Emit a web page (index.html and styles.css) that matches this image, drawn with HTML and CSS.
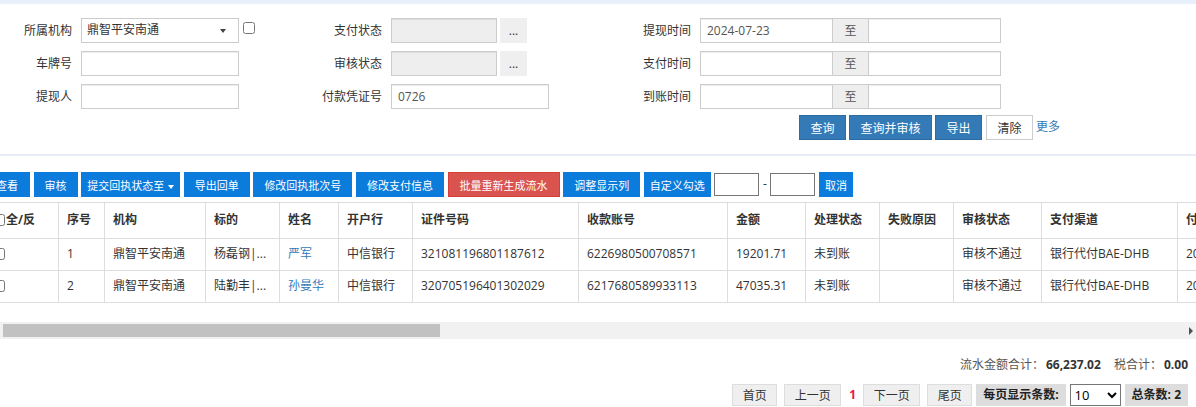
FILE: index.html
```html
<!DOCTYPE html>
<html lang="zh-CN">
<head>
    <meta charset="UTF-8">
    <title>提现流水</title>
    <link rel="stylesheet" href="styles.css">
</head>
<body>
    <div class="topbar"></div>

    <form class="search">
        <div class="search-grid">
            <label>所属机构</label>
            <div class="ctrl">
                <div class="input select w158">鼎智平安南通<span class="caret"></span></div>
                <input type="checkbox" class="org-check">
            </div>
            <label>支付状态</label>
            <div class="ctrl">
                <input type="text" class="input readonly w106" readonly>
                <button type="button" class="dots">...</button>
            </div>
            <label>提现时间</label>
            <div class="ctrl">
                <input type="text" class="input w133" value="2024-07-23">
                <span class="addon">至</span>
                <input type="text" class="input w133">
            </div>

            <label>车牌号</label>
            <div class="ctrl"><input type="text" class="input w158"></div>
            <label>审核状态</label>
            <div class="ctrl">
                <input type="text" class="input readonly w106" readonly>
                <button type="button" class="dots">...</button>
            </div>
            <label>支付时间</label>
            <div class="ctrl">
                <input type="text" class="input w133">
                <span class="addon">至</span>
                <input type="text" class="input w133">
            </div>

            <label>提现人</label>
            <div class="ctrl"><input type="text" class="input w158"></div>
            <label>付款凭证号</label>
            <div class="ctrl"><input type="text" class="input w158" value="0726"></div>
            <label>到账时间</label>
            <div class="ctrl">
                <input type="text" class="input w133">
                <span class="addon">至</span>
                <input type="text" class="input w133">
            </div>
        </div>

        <div class="actions">
            <button type="button" class="btn btn-primary">查询</button>
            <button type="button" class="btn btn-primary">查询并审核</button>
            <button type="button" class="btn btn-primary">导出</button>
            <button type="button" class="btn btn-default">清除</button>
            <a href="#" class="more">更多</a>
        </div>
    </form>

    <div class="divider"></div>

    <div class="list">
        <div class="toolbar">
            <button class="tbtn first">查看</button>
            <button class="tbtn">审核</button>
            <button class="tbtn drop">提交回执状态至<span class="caret white"></span></button>
            <button class="tbtn">导出回单</button>
            <button class="tbtn">修改回执批次号</button>
            <button class="tbtn">修改支付信息</button>
            <button class="tbtn danger">批量重新生成流水</button>
            <button class="tbtn">调整显示列</button>
            <button class="tbtn tight">自定义勾选</button>
            <input type="text" class="pick">
            <span class="dash">-</span>
            <input type="text" class="pick">
            <button class="tbtn tight">取消</button>
        </div>

        <div class="table-wrap">
            <table class="grid">
                <colgroup>
                    <col style="width:74px">
                    <col style="width:46px">
                    <col style="width:101px">
                    <col style="width:74px">
                    <col style="width:59px">
                    <col style="width:74px">
                    <col style="width:166px">
                    <col style="width:149px">
                    <col style="width:78px">
                    <col style="width:74px">
                    <col style="width:74px">
                    <col style="width:88px">
                    <col style="width:136px">
                    <col style="width:140px">
                </colgroup>
                <thead>
                    <tr>
                        <th><input type="checkbox" class="row-check">全/反</th>
                        <th>序号</th>
                        <th>机构</th>
                        <th>标的</th>
                        <th>姓名</th>
                        <th>开户行</th>
                        <th>证件号码</th>
                        <th>收款账号</th>
                        <th>金额</th>
                        <th>处理状态</th>
                        <th>失败原因</th>
                        <th>审核状态</th>
                        <th>支付渠道</th>
                        <th>付款时间</th>
                    </tr>
                </thead>
                <tbody>
                    <tr>
                        <td><input type="checkbox" class="row-check"></td>
                        <td>1</td>
                        <td>鼎智平安南通</td>
                        <td>杨磊钢|...</td>
                        <td><a href="#" class="name">严军</a></td>
                        <td>中信银行</td>
                        <td>321081196801187612</td>
                        <td>6226980500708571</td>
                        <td>19201.71</td>
                        <td>未到账</td>
                        <td></td>
                        <td>审核不通过</td>
                        <td>银行代付BAE-DHB</td>
                        <td>2024-07-23 10:21</td>
                    </tr>
                    <tr>
                        <td><input type="checkbox" class="row-check"></td>
                        <td>2</td>
                        <td>鼎智平安南通</td>
                        <td>陆勤丰|...</td>
                        <td><a href="#" class="name">孙曼华</a></td>
                        <td>中信银行</td>
                        <td>320705196401302029</td>
                        <td>6217680589933113</td>
                        <td>47035.31</td>
                        <td>未到账</td>
                        <td></td>
                        <td>审核不通过</td>
                        <td>银行代付BAE-DHB</td>
                        <td>2024-07-23 10:21</td>
                    </tr>
                </tbody>
            </table>
        </div>

        <div class="hscroll">
            <div class="thumb"></div>
            <span class="arrow"></span>
        </div>
    </div>

    <div class="totals">
        <span class="sum-label">流水金额合计：</span><b class="sum-value">66,237.02</b>
        <span class="sum-label">税合计：</span><b class="sum-value last">0.00</b>
    </div>

    <div class="pager">
        <button class="pbtn">首页</button>
        <button class="pbtn">上一页</button>
        <span class="current">1</span>
        <button class="pbtn">下一页</button>
        <button class="pbtn">尾页</button>
        <span class="pinfo">每页显示条数:</span>
        <select class="psize">
            <option>10</option>
            <option>20</option>
            <option>50</option>
        </select>
        <span class="pinfo">总条数: 2</span>
    </div>
</body>
</html>
```

FILE: styles.css
```css
body {
    margin: 0;
    width: 1196px;
    overflow: hidden;
    background: #fff;
    color: #333;
    font-family: "Open Sans", "Noto Sans CJK SC", sans-serif;
    font-size: 12px;
    line-height: 1.4;
}

button,
input,
select {
    font-family: inherit;
}

.topbar {
    height: 4px;
    background: #e8f1fb;
}

/* search form */
.search {
    padding-top: 14px;
}

.search-grid {
    display: grid;
    grid-template-columns: 72px 221px 71px 220px 71px 301px;
    grid-auto-rows: 25px;
    column-gap: 9px;
    row-gap: 8px;
}

.search-grid label {
    text-align: right;
    line-height: 25px;
    white-space: nowrap;
}

.ctrl {
    display: flex;
    align-items: center;
}

.input {
    height: 25px;
    box-sizing: border-box;
    border: 1px solid #ccc;
    padding: 0 6px;
    font-size: 12px;
    color: #555;
    background: #fff;
    box-shadow: inset 0 1px 1px rgba(0, 0, 0, 0.075);
    outline: none;
}

.w158 { width: 158px; }
.w133 { width: 133px; }
.w106 { width: 106px; }

.select {
    display: flex;
    align-items: center;
    justify-content: space-between;
    padding: 0 12px 0 5px;
    color: #333;
    box-shadow: none;
}

.caret {
    display: inline-block;
    width: 0;
    height: 0;
    border-top: 4px solid #444;
    border-left: 3px solid transparent;
    border-right: 3px solid transparent;
}

.caret.white {
    border-top-color: #fff;
    margin-left: 4px;
    vertical-align: middle;
}

.org-check {
    align-self: flex-start;
    width: 12px;
    height: 12px;
    margin: 4px 0 0 4px;
}

.readonly {
    background: #eee;
}

.dots {
    width: 27px;
    height: 25px;
    margin-left: 3px;
    border: none;
    background: #efefef;
    color: #333;
    font-size: 12px;
    padding: 0;
}

.addon {
    width: 35px;
    height: 25px;
    box-sizing: border-box;
    border-top: 1px solid #ccc;
    border-bottom: 1px solid #ccc;
    background: #eee;
    text-align: center;
    line-height: 23px;
    color: #555;
}

.actions {
    display: flex;
    align-items: center;
    gap: 3px;
    margin: 6px 0 0 799px;
}

.btn {
    height: 25px;
    padding: 0 10.5px;
    font-size: 12px;
    border: 1px solid transparent;
    cursor: pointer;
}

.btn-primary {
    background: #337ab7;
    border-color: #2e6da4;
    color: #fff;
}

.btn-default {
    background: #fff;
    border-color: #ccc;
    color: #333;
    margin-left: 1px;
}

.more {
    color: #337ab7;
    text-decoration: none;
    margin-top: -1px;
}

.divider {
    height: 2px;
    margin-top: 14px;
    background: #e8edf5;
}

/* list */
.list {
    margin: 16px 0 0 -16px;
}

.toolbar {
    display: flex;
    align-items: center;
    gap: 3.6px;
    height: 25px;
}

.tbtn {
    height: 25px;
    padding: 0 11px;
    border: none;
    background: #0b7bdc;
    color: #fff;
    font-size: 11px;
    white-space: nowrap;
    cursor: pointer;
}

.tbtn.first {
    padding: 0 12px;
}

.tbtn.drop {
    padding: 0 6px;
}

.tbtn.danger {
    background: #d9534f;
    border: 1px solid #d43f3a;
}

.tbtn.tight {
    padding: 0 6px;
}

.pick {
    width: 45px;
    height: 23px;
    box-sizing: border-box;
    border: 1px solid #767676;
    margin: 0;
}

.dash {
    padding: 0;
    color: #333;
}

.table-wrap {
    margin-top: 5px;
    overflow: hidden;
}

.grid {
    border-collapse: collapse;
    table-layout: fixed;
    width: 1333px;
}

.grid th,
.grid td {
    border: 1px solid #ddd;
    padding: 0 8px;
    text-align: left;
    white-space: nowrap;
    overflow: hidden;
}

.grid th {
    height: 35px;
    font-weight: bold;
    color: #333;
}

.grid td {
    height: 31px;
}

.row-check {
    width: 12px;
    height: 12px;
    margin: 0 1px 0 0;
    vertical-align: -2px;
}

.name {
    color: #337ab7;
    text-decoration: none;
}

.hscroll {
    display: flex;
    align-items: center;
    height: 17px;
    margin-top: 19px;
    background: #f1f1f1;
}

.thumb {
    width: 437px;
    height: 13px;
    margin-left: 19px;
    background: #c1c1c1;
}

.arrow {
    margin-left: auto;
    margin-right: 3px;
    width: 0;
    height: 0;
    border-left: 4px solid #505050;
    border-top: 4px solid transparent;
    border-bottom: 4px solid transparent;
}

/* footer */
.totals {
    margin-top: 18px;
    padding-right: 8px;
    text-align: right;
    line-height: 16px;
}

.sum-label {
    color: #555;
}

.sum-value {
    color: #333;
    margin: 0 10px 0 2px;
}

.sum-value.last {
    margin-right: 0;
}

.pager {
    display: flex;
    justify-content: flex-end;
    align-items: center;
    margin-top: 11px;
    padding-right: 8px;
    height: 22px;
}

.pbtn {
    height: 22px;
    padding: 0 9.5px;
    margin-left: 7px;
    border: 1px solid #ddd;
    background: #efefef;
    color: #333;
    font-size: 12px;
}

.current {
    color: #f0124b;
    font-weight: bold;
    margin: 0 0 0 8px;
}

.pinfo {
    height: 22px;
    line-height: 22px;
    padding: 0 7px;
    margin-left: 4px;
    background: #ddd;
    font-weight: bold;
    color: #222;
}

.pinfo:first-of-type {
    margin-left: 5px;
}

.psize {
    width: 51px;
    height: 22px;
    margin-left: 4px;
    border: 1px solid #767676;
    background: #fff;
    font-size: 13px;
}
```
